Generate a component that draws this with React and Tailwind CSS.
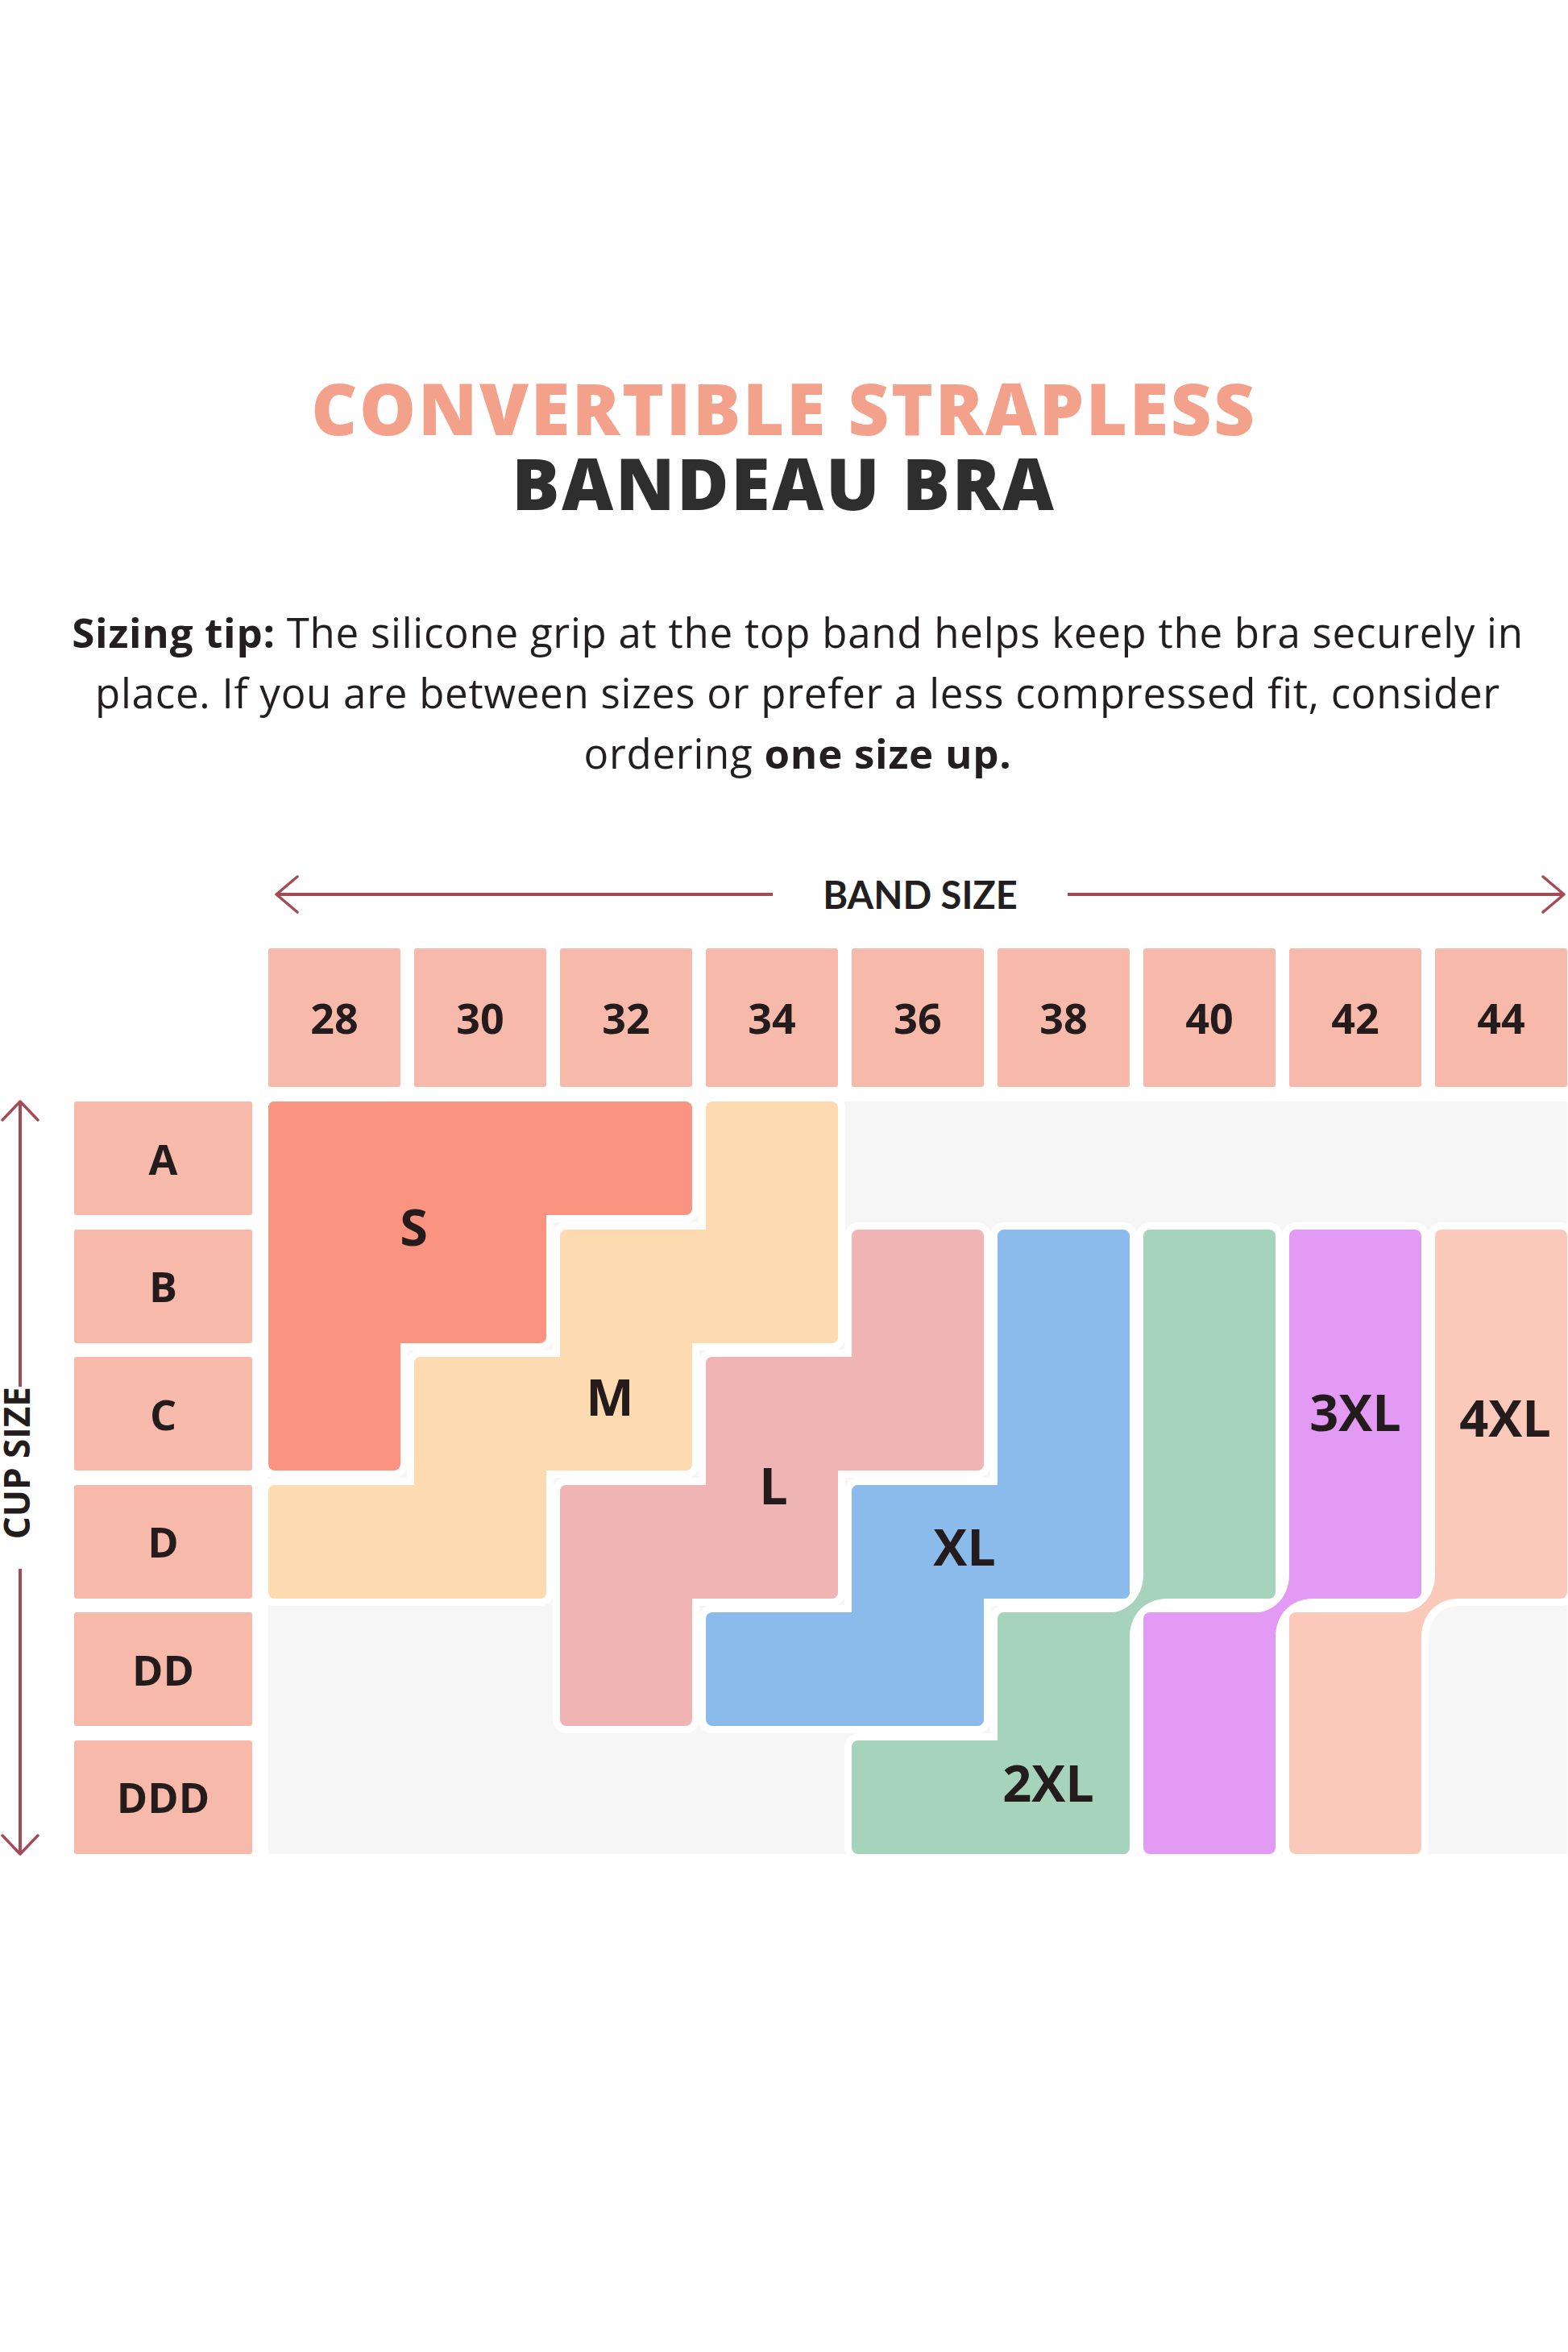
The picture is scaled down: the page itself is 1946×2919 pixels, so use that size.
import React from "react";

// cup / band size chart for the bandeau bra

const bands = ["28", "30", "32", "34", "36", "38", "40", "42", "44"];
const cups = ["A", "B", "C", "D", "DD", "DDD"];

const S = "bg-[#fa9480]";
const M = "bg-[#fedab0]";
const L = "bg-[#efb4b3]";
const XL = "bg-[#8bbbeb]";
const XXL = "bg-[#a6d3bb]";
const XXXL = "bg-[#e39af4]";
const XXXXL = "bg-[#fbc9b9]";

// every size is a staircase, built out of overlapping rectangles
const shapes = [
  { pos: "row-start-1 col-start-1 col-span-3", bg: S },
  { pos: "row-start-1 row-span-2 col-start-1 col-span-2", bg: S },
  { pos: "row-start-1 row-span-3 col-start-1", bg: S },

  { pos: "row-start-1 row-span-2 col-start-4", bg: M },
  { pos: "row-start-2 col-start-3 col-span-2", bg: M },
  { pos: "row-start-2 row-span-2 col-start-3", bg: M },
  { pos: "row-start-3 col-start-2 col-span-2", bg: M },
  { pos: "row-start-3 row-span-2 col-start-2", bg: M },
  { pos: "row-start-4 col-start-1 col-span-2", bg: M },

  { pos: "row-start-2 row-span-2 col-start-5", bg: L },
  { pos: "row-start-3 col-start-4 col-span-2", bg: L },
  { pos: "row-start-3 row-span-2 col-start-4", bg: L },
  { pos: "row-start-4 col-start-3 col-span-2", bg: L },
  { pos: "row-start-4 row-span-2 col-start-3", bg: L },

  { pos: "row-start-2 row-span-3 col-start-6", bg: XL },
  { pos: "row-start-4 col-start-5 col-span-2", bg: XL },
  { pos: "row-start-4 row-span-2 col-start-5", bg: XL },
  { pos: "row-start-5 col-start-4 col-span-2", bg: XL },

  { pos: "row-start-2 row-span-3 col-start-7", bg: XXL },
  { pos: "row-start-5 row-span-2 col-start-6", bg: XXL },
  { pos: "row-start-6 col-start-5 col-span-2", bg: XXL },

  { pos: "row-start-2 row-span-3 col-start-8", bg: XXXL },
  { pos: "row-start-5 row-span-2 col-start-7", bg: XXXL },

  { pos: "row-start-2 row-span-3 col-start-9", bg: XXXXL },
  { pos: "row-start-5 row-span-2 col-start-8", bg: XXXXL },
];

// diagonal joins where a size steps down one column
const necks = [
  { pos: "row-start-5 col-start-6", fill: "#a6d3bb" },
  { pos: "row-start-5 col-start-7", fill: "#e39af4" },
  { pos: "row-start-5 col-start-8", fill: "#fbc9b9" },
];

const NECK =
  "M17,-30 C17,-2 -2,18 -30,18 L-30,60 L0,60 L0,48 C0,20 19,0 47,0 L47,-30 Z";

const labels = [
  { text: "S", pos: "row-start-1 row-span-2 col-start-1 col-span-2", shift: "translate-x-[8px] translate-y-[5px]" },
  { text: "M", pos: "row-start-3 col-start-3", shift: "-translate-x-[20px] -translate-y-[22px]" },
  { text: "L", pos: "row-start-3 row-span-2 col-start-4", shift: "translate-x-[2px] translate-y-[9px]" },
  { text: "XL", pos: "row-start-4 col-start-5", shift: "translate-x-[58px] translate-y-[5px]" },
  { text: "2XL", pos: "row-start-6 col-start-6", shift: "-translate-x-[19px] -translate-y-[19px]" },
  { text: "3XL", pos: "row-start-3 col-start-8", shift: "-translate-y-[3px]" },
  { text: "4XL", pos: "row-start-3 col-start-9", shift: "translate-x-[5px] translate-y-[4px]" },
];

const ARROW = "#a44c55";

const Neck = ({ pos, fill, halo }) => (
  <svg
    className={`${pos} self-start justify-self-end -mt-[47.6px] -mr-[47px] h-[90px] w-[77px] overflow-visible`}
    viewBox="-30 -30 77 90"
  >
    <path
      d={NECK}
      fill={halo ? "#ffffff" : fill}
      stroke={halo ? "#ffffff" : "none"}
      strokeWidth={halo ? 18 : 0}
      strokeLinejoin="round"
    />
  </svg>
);

const App = () => {
  return (
    <div className="relative h-[2919px] w-[1946px] overflow-hidden bg-white font-['Open_Sans'] text-[#241c1c]">
      {/* Title */}
      <div className="flex flex-col items-center pt-[462px] text-[88px] font-extrabold leading-none tracking-[2.7px]">
        <div className="text-[#f4a18b]">CONVERTIBLE STRAPLESS</div>
        <div className="mt-[5px] text-[#2e2e2e]">BANDEAU BRA</div>
      </div>

      {/* Sizing tip */}
      <p className="mt-[104px] pl-[34px] text-center text-[51px] leading-[75px] tracking-[0.75px] text-[#231f20]">
        <b className="font-bold">Sizing tip:</b> The silicone grip at the top band helps keep the bra securely in
        <br />
        place. If you are between sizes or prefer a less compressed fit, consider
        <br />
        ordering <b className="font-bold">one size up.</b>
      </p>

      {/* Band size arrow */}
      <div className="mt-[108px] flex h-[60px] items-center pl-[340px] pr-[2px]">
        <svg width="32" height="48" viewBox="0 0 32 48" className="shrink-0">
          <polyline points="29,2 3,24 29,46" fill="none" stroke={ARROW} strokeWidth="3.5" strokeLinecap="round" strokeLinejoin="round" />
        </svg>
        <div className="-ml-[29px] h-[3.5px] flex-1 bg-[#a44c55]" />
        <span className="px-[62px] font-['Lato'] text-[47px] font-bold leading-none text-[#231f20]">BAND SIZE</span>
        <div className="-mr-[29px] h-[3.5px] flex-1 bg-[#a44c55]" />
        <svg width="32" height="48" viewBox="0 0 32 48" className="shrink-0">
          <polyline points="3,2 29,24 3,46" fill="none" stroke={ARROW} strokeWidth="3.5" strokeLinecap="round" strokeLinejoin="round" />
        </svg>
      </div>

      {/* Band header */}
      <div className="ml-[333px] mt-[37px] flex gap-[17px]">
        {bands.map((b) => (
          <div
            key={b}
            className="flex h-[172px] w-[164px] shrink-0 items-center justify-center rounded-[3px] bg-[#f7b9a9] text-[52px] font-bold"
          >
            {b}
          </div>
        ))}
      </div>

      <div className="mt-[18px] flex">
        {/* Cup size arrow */}
        <div className="-my-[2px] flex w-[50px] flex-col items-center">
          <svg width="50" height="28" viewBox="0 0 50 28" className="shrink-0">
            <polyline points="3,25 25,2 47,25" fill="none" stroke={ARROW} strokeWidth="3.5" strokeLinecap="round" strokeLinejoin="round" />
          </svg>
          <div className="-mt-[26px] w-[3.5px] flex-1 bg-[#a44c55]" />
          <span className="mb-[36px] -translate-x-[5px] rotate-180 py-[32px] text-[44px] font-bold leading-none [writing-mode:vertical-rl]">
            CUP SIZE
          </span>
          <div className="-mb-[26px] w-[3.5px] flex-1 bg-[#a44c55]" />
          <svg width="50" height="28" viewBox="0 0 50 28" className="shrink-0">
            <polyline points="3,3 25,26 47,3" fill="none" stroke={ARROW} strokeWidth="3.5" strokeLinecap="round" strokeLinejoin="round" />
          </svg>
        </div>

        {/* Cup labels */}
        <div className="ml-[42px] flex w-[221px] flex-col gap-[17.6px]">
          {cups.map((c) => (
            <div
              key={c}
              className="flex h-[141px] items-center justify-center rounded-[3px] bg-[#f7b9a9] text-[52px] font-bold"
            >
              {c}
            </div>
          ))}
        </div>

        {/* Size grid */}
        <div className="ml-[20px] grid grid-cols-[repeat(9,164px)] grid-rows-[repeat(6,141px)] gap-x-[17px] gap-y-[17.6px] bg-[#f6f6f6]">
          {shapes.map((s, i) => (
            <div key={`h${i}`} className={`${s.pos} rounded-[8px] bg-white shadow-[0_0_0_9px_#ffffff]`} />
          ))}
          {necks.map((n, i) => (
            <Neck key={`nh${i}`} {...n} halo />
          ))}
          {shapes.map((s, i) => (
            <div key={`f${i}`} className={`${s.pos} rounded-[8px] ${s.bg}`} />
          ))}
          {necks.map((n, i) => (
            <Neck key={`nf${i}`} {...n} />
          ))}
          {labels.map((l) => (
            <div key={l.text} className={`${l.pos} flex items-center justify-center`}>
              <span className={`${l.shift} text-[63px] font-bold leading-none`}>{l.text}</span>
            </div>
          ))}
        </div>
      </div>
    </div>
  );
};

export default App;
